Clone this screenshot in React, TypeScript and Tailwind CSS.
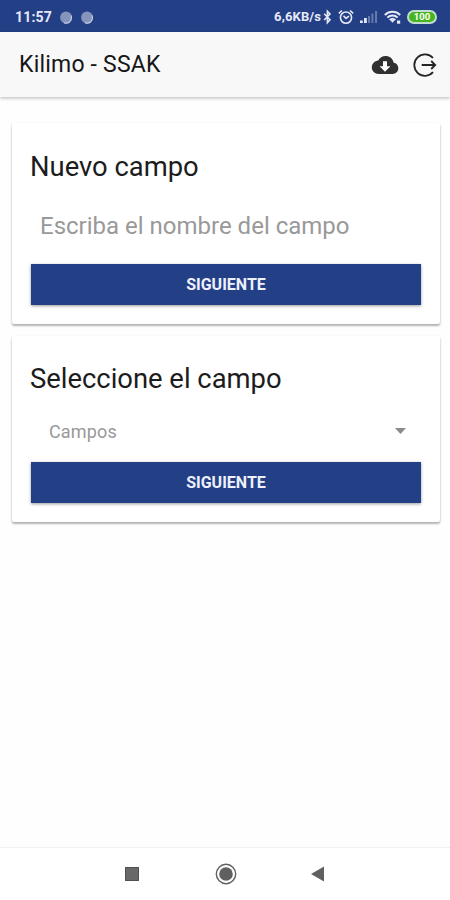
import type { ReactNode } from 'react';

type CardProps = {
  title: string;
  className?: string;
  children: ReactNode;
};

function StatusBar() {
  return (
    <div className="flex h-8 shrink-0 items-center bg-[#233f85] pl-[15px] pr-[13px] pt-0.5 text-[#e6e9f8]">
      <span className="w-[45px] text-[14px] font-bold leading-4 tracking-[0.2px]">11:57</span>
      <span className="flex gap-[9px]">
        <NotificationDot />
        <NotificationDot />
      </span>
      <span className="ml-auto whitespace-nowrap text-[13px] font-bold leading-4 tracking-[0.1px]">6,6KB/s</span>
      {/* Bluetooth */}
      <svg className="ml-[2px] h-4 w-[9px]" viewBox="0 0 9 16" fill="none" stroke="currentColor" strokeWidth="1.6">
        <path d="M1.2 4.8 7 10.8 4.4 13.6V2.2L7 5 1.2 11" />
      </svg>
      {/* Alarm */}
      <svg className="ml-[6px] h-4 w-4" viewBox="0 0 16 16" fill="none" stroke="currentColor" strokeWidth="1.6">
        <circle cx="8" cy="8.6" r="5.6" />
        <path d="M.8 4.3 4 1.5M15.2 4.3 12 1.5M5.5 6.8 8 9.4l3-2.3" />
      </svg>
      {/* Mobile signal */}
      <svg className="ml-[6px] h-4 w-[17px]" viewBox="0 0 17 16" fill="currentColor">
        <path d="M0 11.5h2.8V14H0zM4 9h2.8v5H4z" />
        <path d="M8 7h2v7H8zM11.4 4.5h2V14h-2zM15 2h2v12h-2z" opacity=".35" />
      </svg>
      {/* Wi-Fi */}
      <svg className="ml-[7px] h-4 w-[18px]" viewBox="0 0 18 16" fill="none" stroke="currentColor" strokeWidth="2">
        <path d="M.8 6c4.4-4.2 11-4.2 15.4 0M3.3 8.6c3-2.9 7.4-2.9 10.4 0M5.7 11c1.7-1.6 3.9-1.6 5.6 0" />
        <path d="M6.5 11.5 8.5 13.7l2-2.2c-1.2-1-2.8-1-4 0z" fill="currentColor" stroke="none" />
        <path d="M13 11.5h3.2v3.2H13z" fill="currentColor" stroke="none" />
      </svg>
      <span className="ml-[5px] flex h-[14px] w-[30px] items-center justify-center rounded-full border-2 border-[#c3dcd0] bg-[#46b51e] text-[9.5px] font-bold leading-none text-white">
        100
      </span>
    </div>
  );
}

function NotificationDot() {
  return (
    <svg className="h-[13px] w-3" viewBox="0 0 12 13">
      <circle cx="6" cy="6.5" r="5.9" fill="#8594ba" />
      <path d="M11 4.4c1.2 3.3-.3 7-3.9 7.7-1.2.2-2.2 0-3.1-.4" fill="none" stroke="#c3cbe2" strokeWidth="1.2" />
    </svg>
  );
}

function Header() {
  return (
    <header className="relative flex h-[65px] shrink-0 items-center bg-[#f8f8f8] pl-[19px] pr-[13px] shadow-[0_1px_3px_rgba(0,0,0,0.2),0_2px_4px_rgba(0,0,0,0.08)]">
      <h1 className="text-[23px] leading-8 tracking-[0.2px] text-[#161616]">Kilimo - SSAK</h1>
      <button className="ml-auto" aria-label="Descargar">
        <svg className="h-5 w-7" viewBox="0 0 28 20">
          <path d="M22.7 7.8C22 3.7 18.5 1 14.5 1c-3.2 0-6 1.8-7.3 4.5C3.7 5.8.8 8.7.8 12.3c0 3.8 3 6.7 6.8 6.7h14c3.3 0 5.7-2.6 5.7-5.7 0-2.9-2-5.3-4.6-5.5z" fill="#303030" />
          <path d="M12 6.3h4v5h3.4L14 16.8l-5.4-5.5H12z" fill="#fff" />
        </svg>
      </button>
      <button className="ml-[14px]" aria-label="Salir">
        <svg className="h-6 w-6" viewBox="0 0 24 24" fill="none" stroke="#252525" strokeWidth="1.8">
          <path d="M20 5A10.7 10.7 0 1 0 20 19.2M8.7 12H22M18.2 8l4 4-4 4" />
        </svg>
      </button>
    </header>
  );
}

function Card({ title, className = '', children }: CardProps) {
  return (
    <section className={`flex flex-col rounded-[2px] bg-white px-[19px] shadow-[0_2px_2px_rgba(0,0,0,0.24),0_1px_3px_rgba(0,0,0,0.12)] ${className}`}>
      <h2 className="-ml-px whitespace-nowrap text-[27.4px] leading-9 text-[#1c1c1c]">{title}</h2>
      {children}
    </section>
  );
}

function NextButton() {
  return (
    <button className="h-[41px] w-full bg-[#233f85] text-[16px] font-bold leading-5 text-[#eef0fc] shadow-[0_1px_3px_rgba(0,0,0,0.4)]">
      SIGUIENTE
    </button>
  );
}

function NavBar() {
  return (
    <nav className="flex h-[53px] shrink-0 items-center border-t border-[#f1f1f1] bg-white pl-[125px] text-[#606060]">
      <span className="size-[14px] border border-[#505050] bg-[#686868]" />
      <svg className="ml-[76px] size-[22px]" viewBox="0 0 22 22">
        <circle cx="11" cy="11" r="9.7" fill="none" stroke="#606060" strokeWidth="1.4" />
        <circle cx="11" cy="11" r="6.8" fill="#606060" />
      </svg>
      <svg className="ml-[74px] h-4 w-[13px]" viewBox="0 0 13 16">
        <path d="M0 8 13 .5v15z" fill="#606060" />
      </svg>
    </nav>
  );
}

export default function App() {
  return (
    <div className="flex h-[900px] w-[450px] flex-col overflow-hidden bg-[#fefefe] font-['Roboto',sans-serif]">
      <StatusBar />
      <Header />
      <main className="flex grow flex-col gap-3 pl-3 pr-[10px] pt-[26px]">
        <Card title="Nuevo campo" className="h-[201px] pt-[26px]">
          <input
            className="mt-4 h-[50px] w-full bg-transparent pl-[9px] text-[24px] text-[#777] outline-none placeholder:text-[#999]"
            placeholder="Escriba el nombre del campo"
          />
          <div className="mt-[13px]">
            <NextButton />
          </div>
        </Card>
        <Card title="Seleccione el campo" className="h-[186px] pt-[25px]">
          <div className="mt-[14px] flex h-10 items-center justify-between pl-[18px] pr-[15px] text-[18px] tracking-[0.15px] text-[#999]">
            <span>Campos</span>
            <svg className="h-[6px] w-[11px]" viewBox="0 0 11 6">
              <path d="M0 0h11L5.5 6z" fill="#8b8b8b" />
            </svg>
          </div>
          <div className="mt-[11px]">
            <NextButton />
          </div>
        </Card>
      </main>
      <NavBar />
    </div>
  );
}
